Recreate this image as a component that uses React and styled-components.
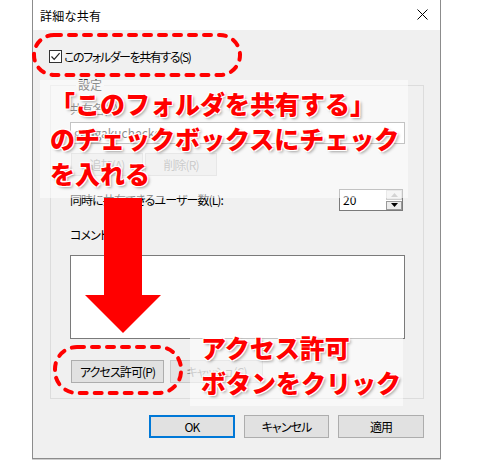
import React from "react";
import styled, { createGlobalStyle } from "styled-components";

const Global = createGlobalStyle`
  html, body { margin: 0; padding: 0; background: #ffffff; }
  body {
    font-family: "Noto Sans CJK JP", "Noto Sans", sans-serif;
    font-size: 12px;
    color: #000;
  }
  * { box-sizing: border-box; }
`;

const Page = styled.div`
  position: relative;
  width: 480px;
  height: 461px;
  overflow: hidden;
  background: #fff;
`;

const Dialog = styled.div`
  margin-left: 32px;
  width: 409px;
  height: 459px;
  border: 1px solid #8c8c8c;
  border-top: none;
  background: #f0f0f0;
  display: flex;
  flex-direction: column;
  font-feature-settings: "palt";
  letter-spacing: -0.9px;
  box-shadow: 0 1px 0 #cfcfcf;
`;

const TitleBar = styled.div`
  height: 30px;
  background: #ffffff;
  display: flex;
  align-items: center;
  justify-content: space-between;
  padding: 0 7px 0 7px;
  font-size: 12px;
  letter-spacing: 0.3px;
`;

const CloseButton = styled.div`
  width: 22px;
  height: 22px;
  display: flex;
  align-items: center;
  justify-content: center;
  margin-top: -2px;
`;

const Body = styled.div`
  flex: 1;
  display: flex;
  flex-direction: column;
  padding: 20px 16px 0 16px;
`;

const CheckRow = styled.label`
  display: flex;
  align-items: center;
  gap: 2px;
  height: 13px;
  line-height: 13px;
  letter-spacing: -1.4px;
`;

const CheckBox = styled.span`
  width: 13px;
  height: 13px;
  border: 1px solid #333333;
  background: #ffffff;
  display: flex;
  align-items: center;
  justify-content: center;
`;

const Group = styled.fieldset`
  margin: 15px 0 0 1px;
  width: 374px;
  border: 1px solid #dcdcdc;
  padding: 10px 18px 15px 19px;
  display: flex;
  flex-direction: column;
`;

const Legend = styled.legend`
  margin-left: 6px;
  padding: 0 2px;
  line-height: 14px;
  font-size: 12px;
  letter-spacing: 0;
`;

const FieldLabel = styled.div`
  line-height: 14px;
  margin-top: ${(p) => p.$top || 0}px;
`;

const TextBox = styled.div`
  margin-top: 6px;
  height: 22px;
  border: 1px solid #7a7a7a;
  background: #ffffff;
  padding: 0 3px;
  line-height: 20px;
  letter-spacing: 0;
  color: #000;
`;

const ButtonRow = styled.div`
  display: flex;
  gap: ${(p) => p.$gap || 2}px;
  margin-top: ${(p) => p.$top || 0}px;
  padding-left: 1px;
`;

const Button = styled.div`
  width: ${(p) => p.$w || 86}px;
  height: 23px;
  display: flex;
  align-items: center;
  justify-content: center;
  background: ${(p) => (p.$disabled ? "#e3e3e3" : "#e1e1e1")};
  border: ${(p) =>
    p.$primary ? "2px solid #0078d7" : p.$disabled ? "1px solid #c9c9c9" : "1px solid #adadad"};
  color: ${(p) => (p.$disabled ? "#8d8d8d" : "#000")};
  font-size: 12px;
`;

const SpinRow = styled.div`
  margin-top: 13px;
  display: flex;
  align-items: center;
  justify-content: space-between;
  padding-right: 2px;
`;

const Spin = styled.div`
  width: 64px;
  height: 22px;
  border: 1px solid #7a7a7a;
  background: #fff;
  display: flex;
`;

const SpinValue = styled.div`
  flex: 1;
  padding-left: 3px;
  line-height: 20px;
  letter-spacing: 0;
`;

const SpinButtons = styled.div`
  width: 17px;
  display: flex;
  flex-direction: column;
  gap: 1px;
  padding: 0 0 0 1px;
`;

const SpinButton = styled.div`
  flex: 1;
  background: #ececec;
  border: 1px solid ${(p) => (p.$active ? "#9a9a9a" : "#cfcfcf")};
  display: flex;
  align-items: center;
  justify-content: center;
`;

const CommentBox = styled.div`
  margin-top: 13px;
  height: 84px;
  border: 1px solid #7a7a7a;
  background: #ffffff;
`;

const Footer = styled.div`
  margin-top: 16px;
  display: flex;
  justify-content: flex-end;
  gap: 9px;
`;

/* Annotation layer drawn over the dialog */
const Veil = styled.div`
  position: absolute;
  left: ${(p) => p.$x}px;
  top: ${(p) => p.$y}px;
  width: ${(p) => p.$w}px;
  height: ${(p) => p.$h}px;
  background: rgba(255, 255, 255, 0.55);
`;

const Callout = styled.div`
  position: absolute;
  left: ${(p) => p.$x}px;
  top: ${(p) => p.$y}px;
  font-family: "Noto Sans CJK JP", sans-serif;
  font-weight: 900;
  font-size: 25px;
  line-height: 35px;
  color: #ff0000;
  white-space: nowrap;
  text-shadow: -1px -1px 0 #fff, 1px -1px 0 #fff, -1px 1px 0 #fff, 1px 1px 0 #fff,
    2px 2px 3px rgba(0, 0, 0, 0.35);
`;

const Overlay = styled.svg`
  position: absolute;
  left: 0;
  top: 0;
  pointer-events: none;
`;

export default function App() {
  return (
    <>
      <Global />
      <Page>
        <Dialog>
          <TitleBar>
            <span>詳細な共有</span>
            <CloseButton>
              <svg width="11" height="11" viewBox="0 0 11 11">
                <path d="M0.5 0.5 L10.5 10.5 M10.5 0.5 L0.5 10.5" stroke="#000" strokeWidth="1" />
              </svg>
            </CloseButton>
          </TitleBar>
          <Body>
            <CheckRow>
              <CheckBox>
                <svg width="11" height="11" viewBox="0 0 11 11">
                  <path d="M1.5 5.5 L4.2 8.3 L9.6 2.2" fill="none" stroke="#222" strokeWidth="1.2" />
                </svg>
              </CheckBox>
              <span>このフォルダーを共有する(S)</span>
            </CheckRow>
            <Group>
              <Legend>設定</Legend>
              <FieldLabel>共有名(H):</FieldLabel>
              <TextBox>gengakuchecker</TextBox>
              <ButtonRow $top={9}>
                <Button $w={72} $disabled>追加(A)</Button>
                <Button $w={72} $disabled>削除(R)</Button>
              </ButtonRow>
              <SpinRow>
                <FieldLabel>同時に共有できるユーザー数(L):</FieldLabel>
                <Spin>
                  <SpinValue>20</SpinValue>
                  <SpinButtons>
                    <SpinButton>
                      <svg width="7" height="4" viewBox="0 0 7 4">
                        <path d="M0 4 L3.5 0 L7 4 Z" fill="#a0a0a0" />
                      </svg>
                    </SpinButton>
                    <SpinButton $active>
                      <svg width="7" height="4" viewBox="0 0 7 4">
                        <path d="M0 0 L7 0 L3.5 4 Z" fill="#000" />
                      </svg>
                    </SpinButton>
                  </SpinButtons>
                </Spin>
              </SpinRow>
              <FieldLabel $top={17}>コメント(O):</FieldLabel>
              <CommentBox />
              <ButtonRow $top={21} $gap={6}>
                <Button $w={93}>アクセス許可(P)</Button>
                <Button $w={93} $disabled>キャッシュ(C)</Button>
              </ButtonRow>
            </Group>
            <Footer>
              <Button $primary>OK</Button>
              <Button $w={85}>キャンセル</Button>
              <Button>適用</Button>
            </Footer>
          </Body>
        </Dialog>

        <Veil $x={40} $y={80} $w={368} $h={118} />
        <Veil $x={190} $y={337} $w={213} $h={69} />

        <Overlay width="480" height="461" viewBox="0 0 480 461">
          {/* down arrow */}
          <path d="M104 198 H142 V295 H161 L123 333 L85 295 H104 Z" fill="#ff0000" />
          {/* dashed rings */}
          <rect x="34" y="35" width="206" height="40" rx="20" fill="none" stroke="#ff0000"
            strokeWidth="4" strokeDasharray="7 8" strokeLinecap="round" />
          <rect x="55" y="347" width="126" height="46" rx="22" fill="none" stroke="#ff0000"
            strokeWidth="4" strokeDasharray="7 8" strokeLinecap="round" />
        </Overlay>

        <Callout $x={50} $y={86}>
          「このフォルダを共有する」
          <br />
          のチェックボックスにチェック
          <br />
          を入れる
        </Callout>
        <Callout $x={201} $y={330}>
          アクセス許可
          <br />
          ボタンをクリック
        </Callout>
      </Page>
    </>
  );
}
